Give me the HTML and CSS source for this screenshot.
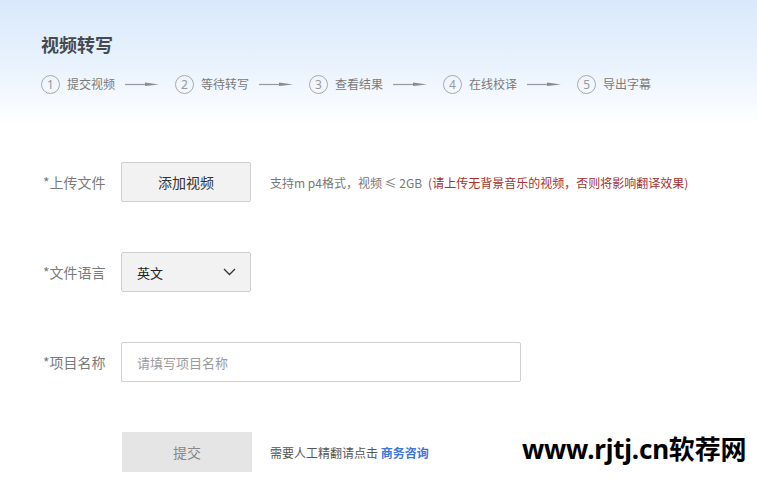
FILE: index.html
```html
<!DOCTYPE html>
<html lang="zh-CN">
<head>
    <meta charset="UTF-8">
    <meta name="viewport" content="width=device-width, initial-scale=1.0">
    <title>视频转写</title>
    <link rel="stylesheet" href="styles.css">
</head>
<body>
    <header class="page-head">
        <h1>视频转写</h1>
        <div class="steps">
            <div class="step"><span class="step-num">1</span><span class="step-name">提交视频</span></div>
            <svg class="step-arrow" width="34" height="8" viewBox="0 0 34 8"><line x1="0" y1="4.5" x2="26" y2="4.5" stroke="#9a9a9a" stroke-width="1.2"/><polygon points="20,2.5 34,4.6 20,6" fill="#8c8c8c"/></svg>
            <div class="step"><span class="step-num">2</span><span class="step-name">等待转写</span></div>
            <svg class="step-arrow" width="34" height="8" viewBox="0 0 34 8"><line x1="0" y1="4.5" x2="26" y2="4.5" stroke="#9a9a9a" stroke-width="1.2"/><polygon points="20,2.5 34,4.6 20,6" fill="#8c8c8c"/></svg>
            <div class="step"><span class="step-num">3</span><span class="step-name">查看结果</span></div>
            <svg class="step-arrow" width="34" height="8" viewBox="0 0 34 8"><line x1="0" y1="4.5" x2="26" y2="4.5" stroke="#9a9a9a" stroke-width="1.2"/><polygon points="20,2.5 34,4.6 20,6" fill="#8c8c8c"/></svg>
            <div class="step"><span class="step-num">4</span><span class="step-name">在线校译</span></div>
            <svg class="step-arrow" width="34" height="8" viewBox="0 0 34 8"><line x1="0" y1="4.5" x2="26" y2="4.5" stroke="#9a9a9a" stroke-width="1.2"/><polygon points="20,2.5 34,4.6 20,6" fill="#8c8c8c"/></svg>
            <div class="step"><span class="step-num">5</span><span class="step-name">导出字幕</span></div>
        </div>
    </header>

    <form class="upload-form">
        <div class="form-row">
            <label class="form-label">*上传文件</label>
            <button type="button" class="btn-add">添加视频</button>
            <span class="hint">支持m p4格式，视频 ≤ 2GB<em class="hint-warn">(请上传无背景音乐的视频，否则将影响翻译效果)</em></span>
        </div>
        <div class="form-row">
            <label class="form-label">*文件语言</label>
            <div class="lang-select">
                <span>英文</span>
                <svg width="13" height="8" viewBox="0 0 13 8"><polyline points="1,1 6.5,6.5 12,1" fill="none" stroke="#333" stroke-width="1.3"/></svg>
            </div>
        </div>
        <div class="form-row">
            <label class="form-label" for="project-name">*项目名称</label>
            <input type="text" id="project-name" class="text-input" placeholder="请填写项目名称">
        </div>
        <div class="form-row">
            <span class="form-label"></span>
            <button type="submit" class="btn-submit">提交</button>
            <span class="contact">需要人工精翻请点击 <a href="#" class="contact-link">商务咨询</a></span>
        </div>
    </form>

    <div class="watermark">www.rjtj.cn软荐网</div>
</body>
</html>
```

FILE: styles.css
```css
* {
    margin: 0;
    padding: 0;
    box-sizing: border-box;
}

body {
    position: relative;
    background-color: #fff;
    font-family: "Noto Sans", "Noto Sans CJK SC", sans-serif;
    color: #333;
}

.page-head {
    height: 125px;
    padding: 32px 41px 0;
    background: linear-gradient(to bottom, #d9e9fb 0%, #eaf3fd 55%, #ffffff 100%);
}

.page-head h1 {
    font-size: 18px;
    line-height: 24px;
    font-weight: bold;
    color: #464a50;
    font-family: "Noto Sans CJK SC", sans-serif;
}

.steps {
    display: flex;
    align-items: center;
    margin-top: 19px;
    height: 18px;
}

.step {
    display: flex;
    align-items: center;
}

.step-num {
    width: 19px;
    height: 19px;
    border: 1px solid #a9a9a9;
    border-radius: 50%;
    display: flex;
    align-items: center;
    justify-content: center;
    font-size: 12px;
    color: #999;
}

.step-name {
    margin-left: 7px;
    font-size: 12px;
    color: #7a7a7a;
    font-family: "Noto Sans CJK SC", sans-serif;
    line-height: 18px;
}

.step-arrow {
    margin: 0 16px 0 10px;
}

.upload-form {
    padding: 37px 0 0 43px;
}

.form-row {
    display: flex;
    align-items: center;
    height: 40px;
    margin-bottom: 50px;
}

.form-row:last-child {
    margin-bottom: 0;
}

.form-label {
    width: 78px;
    flex-shrink: 0;
    font-size: 14px;
    color: #7a7a7a;
    font-family: "Noto Sans CJK SC", sans-serif;
}

.btn-add {
    width: 130px;
    height: 40px;
    background-color: #f2f2f2;
    border: 1px solid #cfcfcf;
    border-radius: 2px;
    font-size: 14px;
    color: #333;
    font-family: "Noto Sans CJK SC", sans-serif;
    cursor: pointer;
}

.hint {
    margin-left: 19px;
    font-size: 12px;
    color: #777;
    font-family: "Noto Sans CJK SC", sans-serif;
}

.hint-warn {
    font-style: normal;
    color: #a63030;
    margin-left: 6px;
}

.lang-select {
    width: 130px;
    height: 40px;
    display: flex;
    align-items: center;
    justify-content: space-between;
    padding: 0 14px 0 15px;
    background-color: #f2f2f2;
    border: 1px solid #cfcfcf;
    border-radius: 2px;
    font-size: 13px;
    color: #222;
    font-family: "Noto Sans CJK SC", sans-serif;
}

.text-input {
    width: 400px;
    height: 40px;
    padding: 0 15px;
    border: 1px solid #cfcfcf;
    border-radius: 2px;
    font-size: 13px;
    font-family: "Noto Sans CJK SC", sans-serif;
    color: #333;
}

.text-input::placeholder {
    color: #9a9a9a;
}

.btn-submit {
    width: 130px;
    height: 40px;
    margin-left: 1px;
    background-color: #e5e5e5;
    border: none;
    font-size: 14px;
    color: #888;
    font-family: "Noto Sans CJK SC", sans-serif;
}

.contact {
    margin-left: 18px;
    font-size: 12px;
    color: #555;
    font-family: "Noto Sans CJK SC", sans-serif;
}

.contact-link {
    color: #3b78d8;
    font-weight: bold;
    text-decoration: none;
}

.watermark {
    position: absolute;
    left: 522px;
    top: 429px;
    font-size: 26px;
    font-weight: bold;
    color: #000;
    font-family: "Noto Sans", "Noto Sans CJK SC", sans-serif;
    letter-spacing: -0.2px;
}
```
